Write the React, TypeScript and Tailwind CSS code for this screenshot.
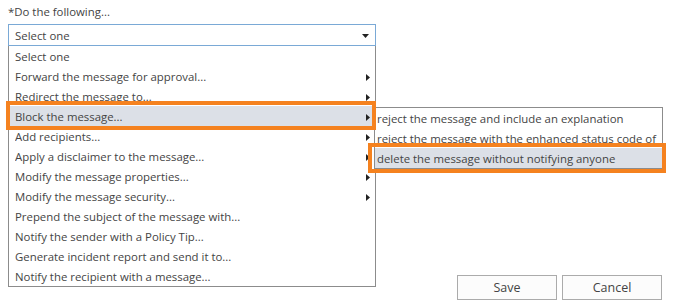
const menuItems = [
  { label: "Select one", sub: false },
  { label: "Forward the message for approval...", sub: true },
  { label: "Redirect the message to...", sub: true },
  { label: "Block the message...", sub: true, active: true },
  { label: "Add recipients...", sub: true },
  { label: "Apply a disclaimer to the message...", sub: true },
  { label: "Modify the message properties...", sub: true },
  { label: "Modify the message security...", sub: true },
  { label: "Prepend the subject of the message with...", sub: false },
  { label: "Notify the sender with a Policy Tip...", sub: false },
  { label: "Generate incident report and send it to...", sub: false },
  { label: "Notify the recipient with a message...", sub: false },
];

const subItems = [
  { label: "reject the message and include an explanation" },
  { label: "reject the message with the enhanced status code of" },
  { label: "delete the message without notifying anyone", active: true },
];

function RightArrow() {
  return (
    <svg width="4" height="7" viewBox="0 0 4 7" className="shrink-0">
      <polygon points="0,0 4,3.5 0,7" fill="#222" />
    </svg>
  );
}

export default function App() {
  return (
    <div
      className="relative flex h-[306px] w-[674px] bg-white text-[11.4px] text-[#444]"
      style={{ fontFamily: '"Open Sans", "Noto Sans", sans-serif' }}
    >
      {/* form column */}
      <div className="flex w-[376px] flex-col pl-[8px] pt-[4px]">
        <div className="h-[16px] leading-[16px]">*Do the following...</div>
        <div className="mt-[4px] flex h-[22px] items-center justify-between border border-[#7aa9d6] pl-[6px] pr-[6px] pt-[2px]">
          <span>Select one</span>
          <svg width="7" height="4" viewBox="0 0 7 4">
            <polygon points="0,0 7,0 3.5,4" fill="#222" />
          </svg>
        </div>
        <div className="h-[241px] border border-t-0 border-[#8c8c8c]">
          {menuItems.map((item) => (
            <div
              key={item.label}
              className={
                "flex h-[20px] items-center justify-between pl-[6px] pr-[5px] pt-[2px] " +
                (item.active ? "bg-[#dce0e7]" : "")
              }
            >
              <span className="truncate">{item.label}</span>
              {item.sub && <RightArrow />}
            </div>
          ))}
        </div>
      </div>

      {/* buttons */}
      <div className="flex flex-1 items-end justify-end gap-[5px] pb-[6px] pr-[12px]">
        <button className="h-[25px] w-[100px] border border-[#ababab] bg-[#fcfcfc] pt-[1px] text-[12.5px] text-[#444]">
          Save
        </button>
        <button className="h-[25px] w-[100px] border border-[#ababab] bg-[#fcfcfc] pt-[1px] text-[12.5px] text-[#444]">
          Cancel
        </button>
      </div>

      {/* submenu flyout */}
      <div className="absolute left-[374px] top-[107px] w-[289px] overflow-hidden border border-[#8c8c8c] bg-white">
        {subItems.map((item) => (
          <div
            key={item.label}
            className={
              "h-[20px] whitespace-nowrap pl-[2px] pt-[1px] leading-[20px] " +
              (item.active ? "bg-[#dce0e7]" : "")
            }
          >
            {item.label}
          </div>
        ))}
      </div>

      {/* annotation boxes */}
      <div className="absolute left-[6px] top-[101px] h-[29px] w-[370px] border-4 border-[#f5821f]" />
      <div className="absolute left-[368px] top-[143px] h-[30px] w-[298px] border-4 border-[#f5821f]" />
    </div>
  );
}
